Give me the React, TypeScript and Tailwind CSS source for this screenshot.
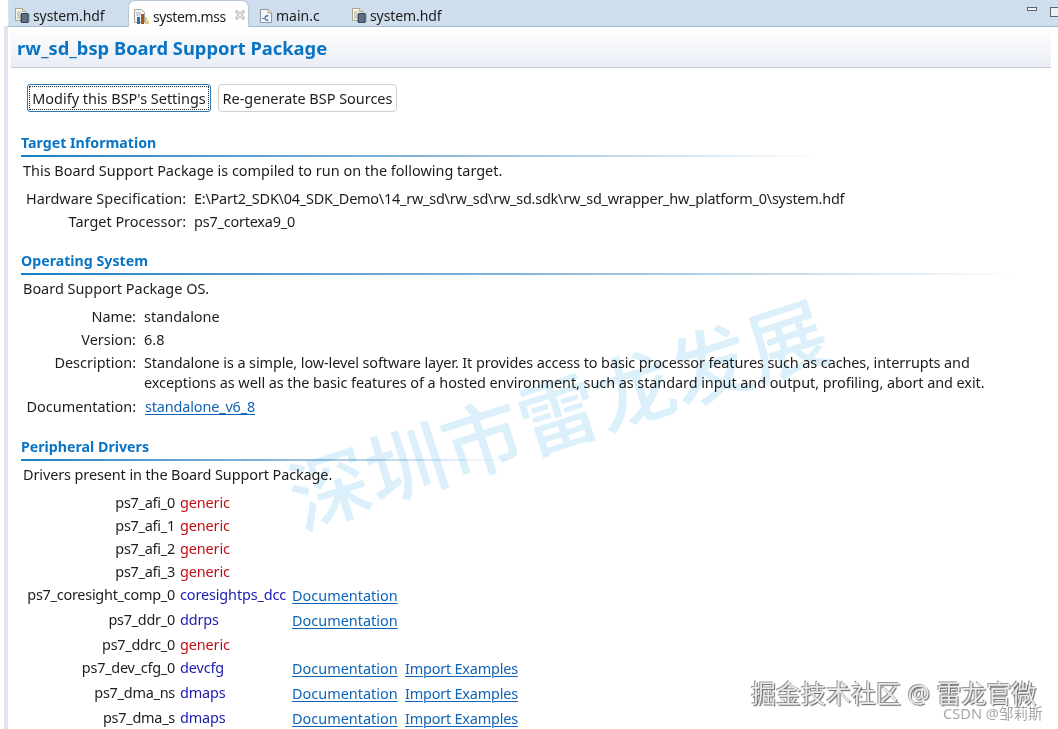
import React from "react";

const font = "[font-family:'Noto_Sans','Noto_Sans_CJK_SC',sans-serif]";

function HdfIcon() {
  return (
    <svg width="17" height="17" viewBox="0 0 17 17" className="shrink-0">
      <path d="M1.5 1.5h7l3 3v9h-10z" fill="#fbf8ea" stroke="#a9a48c" />
      <path d="M8.5 1.5v3h3" fill="#efe7c4" stroke="#a9a48c" />
      <path d="M3 5h4M3 7h3M3 9h3M3 11h3" stroke="#9aa7b5" />
      <rect x="7.5" y="6.5" width="6.5" height="9" fill="#5f6f82" stroke="#3d4856" />
      <path d="M6 8h1.5M6 10h1.5M6 12h1.5M6 14h1.5M14 8h1.5M14 10h1.5M14 12h1.5M14 14h1.5" stroke="#3d4856" />
    </svg>
  );
}

function MssIcon() {
  return (
    <svg width="18" height="18" viewBox="0 0 18 18" className="shrink-0">
      <path d="M1.5 1.5h7l3 3v10h-10z" fill="#f7f6f0" stroke="#a6a6a0" />
      <path d="M3 5h5M3 7h4" stroke="#a5b2c2" />
      <rect x="4" y="9" width="3" height="7" fill="#2f6fa8" />
      <rect x="8" y="6" width="3" height="10" fill="#a5522c" />
      <rect x="12" y="9" width="1.5" height="7" fill="#e8b93b" />
      <path d="M14 10l2.5 6H14z" fill="#e8c24a" />
    </svg>
  );
}

function CIcon() {
  return (
    <svg width="14" height="16" viewBox="0 0 14 16" className="shrink-0">
      <path d="M1.5 1.5h7.5l3.5 3.5v9.5h-11z" fill="#f6f8fb" stroke="#8d97a3" />
      <path d="M9 1.5v3.5h3.5" fill="#e7e3c8" stroke="#a9a48c" />
      <circle cx="4" cy="10.6" r="0.8" fill="#3c6ea5" />
      <path d="M9.4 8.2a2.2 2.2 0 1 0 0 3.6" fill="none" stroke="#3c6ea5" strokeWidth="1.3" />
    </svg>
  );
}

function CloseIcon() {
  return (
    <svg width="12" height="12" viewBox="0 0 12 12" className="shrink-0">
      <path d="M1.5 3L3 1.5 6 4.5l3-3L10.5 3l-3 3 3 3L9 10.5l-3-3-3 3L1.5 9l3-3z" fill="#f4f4f4" stroke="#8f9296" strokeWidth="0.9" />
    </svg>
  );
}

function Section({ title, lineClass, top }: { title: string; lineClass: string; top: string }) {
  return (
    <div className={top}>
      <div className="ml-[21px] h-[22px] text-[14.2px] font-bold leading-[19px] text-[#0a74c4]">{title}</div>
      <div className={`ml-[21px] h-[2px] bg-gradient-to-r from-[#1180c6] via-[#86b4d8] to-transparent ${lineClass}`} />
    </div>
  );
}

function Field({ label, value, w, h }: { label: string; value: React.ReactNode; w: string; h: string }) {
  return (
    <div className={`flex ${h}`}>
      <div className={`${w} shrink-0 whitespace-nowrap text-right`}>{label}</div>
      <div className="ml-[8px] whitespace-nowrap">{value}</div>
    </div>
  );
}

const Link = ({ children, className = "" }: { children: React.ReactNode; className?: string }) => (
  <span className={`text-[#0f63b8] underline decoration-1 underline-offset-2 ${className}`}>{children}</span>
);

const drivers: [string, string, boolean, boolean, string][] = [
  ["ps7_afi_0", "generic", false, false, "h-[23px]"],
  ["ps7_afi_1", "generic", false, false, "h-[23px]"],
  ["ps7_afi_2", "generic", false, false, "h-[23px]"],
  ["ps7_afi_3", "generic", false, false, "h-[23px]"],
  ["ps7_coresight_comp_0", "coresightps_dcc", true, false, "h-[25px]"],
  ["ps7_ddr_0", "ddrps", true, false, "h-[25px]"],
  ["ps7_ddrc_0", "generic", false, false, "h-[23px]"],
  ["ps7_dev_cfg_0", "devcfg", true, true, "h-[25px]"],
  ["ps7_dma_ns", "dmaps", true, true, "h-[25px]"],
  ["ps7_dma_s", "dmaps", true, true, "h-[25px]"],
];

export default function App() {
  return (
    <div className={`relative h-[729px] w-[1058px] overflow-hidden bg-white text-[14.45px] leading-[23px] text-[#1c1c1c] ${font}`}>
      <div className="absolute bottom-0 left-[4px] top-[26px] w-[4px] bg-[#e1e3f2]" />

      {/* tab bar */}
      <div className="relative ml-[8px] flex h-[27px] items-end border-b border-[#a9bccd] bg-[#cfdeed] text-[14px]">
        <div className="flex h-[26px] w-[120px] items-center gap-[2px] rounded-tl-[6px] border-l border-[#d9e3ee] pl-[5px] pt-[5px]">
          <HdfIcon />
          <span className="tracking-[-0.1px]">system.hdf</span>
        </div>
        <div className="-mb-px flex h-[27px] w-[121px] items-center rounded-t-[7px] border-x border-t border-[#b9c7d6] bg-white pl-[4px] pt-[5px]">
          <MssIcon />
          <span className="ml-[2px] tracking-[-0.4px]">system.mss</span>
          <span className="mb-[3px] ml-[8px]"><CloseIcon /></span>
        </div>
        <div className="flex h-[26px] w-[92px] items-center pl-[10px] pt-[5px]">
          <CIcon />
          <span className="ml-[3px]">main.c</span>
        </div>
        <div className="flex h-[26px] items-center gap-[2px] pl-[10px] pt-[5px]">
          <HdfIcon />
          <span className="tracking-[-0.1px]">system.hdf</span>
        </div>
        <div className="absolute right-[21px] top-[7px] h-[4px] w-[10px] border border-[#5b6470] bg-[#eef2f7]" />
        <div className="absolute -right-[2px] top-[7px] h-[10px] w-[10px] border border-[#5b6470] bg-[#eef2f7]" />
      </div>

      {/* form header */}
      <div className="ml-[11px] mr-[7px] flex h-[41px] items-center border-b border-[#c5ccd8] bg-gradient-to-b from-white to-[#e9edf4] pl-[6px] pt-[1px] text-[18.35px] font-bold text-[#0a74c4]">
        rw_sd_bsp Board Support Package
      </div>

      {/* actions */}
      <div className="ml-[27px] mt-[16px] flex h-[28px] gap-[7px]">
        <button className="flex h-[28px] w-[184px] items-center justify-center whitespace-nowrap rounded-[3px] border border-[#2a7ab8] bg-white outline-1 -outline-offset-3 outline-dotted outline-[#222]">
          Modify this BSP's Settings
        </button>
        <button className="flex h-[28px] w-[179px] items-center justify-center whitespace-nowrap rounded-[4px] border border-[#cfcfcf] bg-white">
          Re-generate BSP Sources
        </button>
      </div>

      <Section title="Target Information" lineClass="w-[800px]" top="mt-[21px]" />
      <div className="ml-[23px] mt-[2px] h-[23px]">This Board Support Package is compiled to run on the following target.</div>
      <div className="ml-[26px] mt-[5px]">
        <Field w="w-[160px]" h="h-[23px]" label="Hardware Specification:" value={<span className="tracking-[-0.23px]">E:\Part2_SDK\04_SDK_Demo\14_rw_sd\rw_sd\rw_sd.sdk\rw_sd_wrapper_hw_platform_0\system.hdf</span>} />
        <Field w="w-[160px]" h="h-[23px]" label="Target Processor:" value={<span className="tracking-[-0.2px]">ps7_cortexa9_0</span>} />
      </div>

      <Section title="Operating System" lineClass="w-[1000px]" top="mt-[18px]" />
      <div className="ml-[23px] mt-[2px] h-[23px]">Board Support Package OS.</div>
      <div className="ml-[26px] mt-[5px]">
        <Field w="w-[110px]" h="h-[23px]" label="Name:" value="standalone" />
        <Field w="w-[110px]" h="h-[23px]" label="Version:" value="6.8" />
        <Field
          w="w-[110px]"
          h="h-[44px]"
          label="Description:"
          value={
            <div className="pt-[2px] leading-[20px]">
              <div className="tracking-[-0.1px]">Standalone is a simple, low-level software layer. It provides access to basic processor features such as caches, interrupts and</div>
              <div className="tracking-[-0.06px]">exceptions as well as the basic features of a hosted environment, such as standard input and output, profiling, abort and exit.</div>
            </div>
          }
        />
        <Field w="w-[110px]" h="h-[25px]" label="Documentation:" value={<Link className="ml-[1px] tracking-[-0.15px]">standalone_v6_8</Link>} />
      </div>

      <Section title="Peripheral Drivers" lineClass="w-[490px]" top="mt-[17px]" />
      <div className="ml-[23px] mt-[2px] h-[23px] tracking-[-0.1px]">Drivers present in the Board Support Package.</div>
      <div className="ml-[26px] mt-[5px]">
        {drivers.map(([name, drv, doc, imp, h]) => (
          <div key={name} className={`flex ${h}`}>
            <div className="w-[149px] shrink-0 whitespace-nowrap text-right tracking-[-0.25px]">{name}</div>
            <div className={`ml-[5px] w-[112px] shrink-0 whitespace-nowrap tracking-[-0.13px] ${doc ? "text-[#1a1ab0]" : "text-[#c00f17]"}`}>{drv}</div>
            <div className="w-[113px] shrink-0 pt-[1px]">{doc && <Link>Documentation</Link>}</div>
            <div className="pt-[1px]">{imp && <Link className="tracking-[-0.2px]">Import Examples</Link>}</div>
          </div>
        ))}
      </div>

      {/* watermarks */}
      <div className="pointer-events-none absolute left-[278px] top-[369px] w-[560px] origin-center -rotate-[18deg] whitespace-nowrap text-[80px] font-medium leading-[90px] text-[#dcf0fb] mix-blend-multiply">
        深圳市雷龙发展
      </div>
      <div className="pointer-events-none absolute left-[751px] top-[677px] whitespace-nowrap text-[25px] leading-[32px] text-[#e9e9e9] [text-shadow:1px_1px_1px_#666,-1px_-1px_0_#999]">
        掘金技术社区 @ 雷龙官微
      </div>
      <div className="pointer-events-none absolute left-[943px] top-[704px] whitespace-nowrap text-[14.6px] leading-[18px] text-[#a8a8a8]">
        CSDN @邹莉斯
      </div>
    </div>
  );
}
